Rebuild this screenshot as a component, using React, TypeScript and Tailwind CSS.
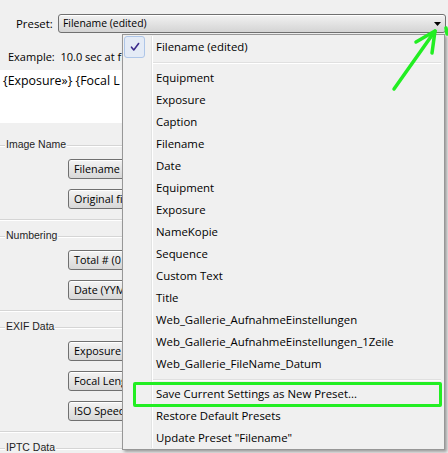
import React from "react";

const presets = [
	"Equipment",
	"Exposure",
	"Caption",
	"Filename",
	"Date",
	"Equipment",
	"Exposure",
	"NameKopie",
	"Sequence",
	"Custom Text",
	"Title",
	"Web_Gallerie_AufnahmeEinstellungen",
	"Web_Gallerie_AufnahmeEinstellungen_1Zeile",
	"Web_Gallerie_FileName_Datum",
];

const actions = [
	"Save Current Settings as New Preset...",
	"Restore Default Presets",
	'Update Preset "Filename"',
];

// only the part left of the open menu is visible
const groups = [
	{ title: "Image Name", top: "mt-[14px]", buttons: ["Filename E", "Original fil"] },
	{ title: "Numbering", top: "mt-[8px]", buttons: ["Total # (0", "Date (YYM"] },
	{ title: "EXIF Data", top: "mt-[8px]", buttons: ["Exposure", "Focal Leng", "ISO Speed"] },
];

function Rule() {
	return <div className="h-px bg-[#d5d5d5] shadow-[0_1px_0_#ffffff]" />;
}

function GroupHeader({ title }: { title: string }) {
	return (
		<div className="flex h-[16px] items-center">
			<div className="w-[5px]">
				<Rule />
			</div>
			<span className="px-[1px] font-['Liberation_Sans',sans-serif] text-[10.5px] text-[#1e1e1e]">
				{title}
			</span>
			<div className="flex-1">
				<Rule />
			</div>
		</div>
	);
}

function Group({ title, top, buttons }: { title: string; top: string; buttons: string[] }) {
	return (
		<div className={top}>
			<GroupHeader title={title} />
			<div className="mt-[6px] flex flex-col gap-[10px] pl-[68px]">
				{buttons.map((b) => (
					<button
						key={b}
						type="button"
						className="h-[20px] w-[140px] shrink-0 whitespace-nowrap rounded-[3px] border border-[#707070] bg-linear-to-b from-[#f4f4f4] to-[#d8d8d8] pl-[5px] text-left text-[10.8px] leading-none text-black shadow-[inset_0_1px_0_#ffffff]"
					>
						{b}
					</button>
				))}
			</div>
			<div className="mt-[10px]">
				<Rule />
			</div>
		</div>
	);
}

function PresetMenu() {
	return (
		<div className="absolute left-[122px] top-[34px] h-[416px] w-[323px] border border-[#979797] bg-[#f0f0f0] pt-px text-[11.4px] text-black shadow-[2px_2px_3px_rgba(0,0,0,0.35)]">
			<div className="absolute bottom-px left-[28px] top-px w-px bg-[#e2e3e3] shadow-[1px_0_0_#ffffff]" />
			<div className="relative flex h-[22px] items-center pl-[1px]">
				<div className="flex h-[22px] w-[21px] items-center justify-center rounded-[3px] border border-[#aec6e8] bg-[#e4ebf6]">
					<svg width="10" height="10" viewBox="0 0 10 10">
						<path d="M1.5 5.2 L3.8 8 L8.6 1.5" fill="none" stroke="#3b2a8c" strokeWidth="1.6" strokeLinecap="round" strokeLinejoin="round" />
					</svg>
				</div>
				<span className="ml-[11px]">Filename (edited)</span>
			</div>
			<div className="relative flex h-[9px] items-center pl-[30px] pr-[3px]">
				<div className="h-px w-full bg-[#e0e0e0] shadow-[0_1px_0_#ffffff]" />
			</div>
			{presets.map((p, i) => (
				<div key={i} className="relative flex h-[22px] items-center pl-[33px]">
					{p}
				</div>
			))}
			<div className="relative flex h-[8px] items-center pl-[30px] pr-[3px]">
				<div className="h-px w-full bg-[#e0e0e0] shadow-[0_1px_0_#ffffff]" />
			</div>
			{actions.map((a) => (
				<div key={a} className="relative flex h-[22px] items-center pl-[33px]">
					{a}
				</div>
			))}
		</div>
	);
}

export default function App() {
	return (
		<div className="relative h-[453px] w-[448px] overflow-hidden bg-[#f0f0f0] font-['Open_Sans',sans-serif] text-[11.4px] text-black">
			<div className="flex items-center gap-[6px] pl-[16px] pr-[2px] pt-[14px]">
				<span className="w-[36px]">Preset:</span>
				<div className="relative flex h-[19px] flex-1 items-center rounded-[3px] border border-[#707070] bg-linear-to-b from-[#f2f2f2] to-[#d4d4d4] pl-[4px] shadow-[inset_0_1px_0_#ffffff]">
					<span className="text-[10.4px]">Filename (edited)</span>
					<svg className="absolute right-[4px] top-[7px]" width="7" height="4" viewBox="0 0 7 4">
						<path d="M0 0 H7 L3.5 4 Z" fill="#000000" />
					</svg>
				</div>
			</div>
			{/* everything right of x=122 is covered by the open menu */}
			<div className="w-[122px] overflow-hidden">
				<div className="w-[446px]">
					<div className="mt-[16px] flex h-[16px] items-center pl-[8px]">
						<span className="whitespace-nowrap text-[11px]">Example:&nbsp; 10.0 sec at f</span>
					</div>
					<div className="mt-[5px] h-[53px] bg-white pl-[3px] pt-[2px]">
						<span className="whitespace-nowrap text-[12.4px]">{"{Exposure»} {Focal L"}</span>
					</div>
					{groups.map((g) => (
						<Group key={g.title} {...g} />
					))}
					<div className="mt-[8px]">
						<GroupHeader title="IPTC Data" />
					</div>
				</div>
			</div>

			<PresetMenu />

			<div className="pointer-events-none absolute left-[133px] top-[382px] h-[25px] w-[309px] rounded-[2px] border-[3px] border-[#22ee22]" />

			<svg className="pointer-events-none absolute left-0 top-0" width="448" height="453" viewBox="0 0 448 453">
				<g fill="none" stroke="#22ee22" strokeWidth="3.5" strokeLinecap="round" strokeLinejoin="round">
					<path d="M394 89 L435 31" />
					<path d="M416 42 L435 31 L432 53" />
					<path d="M446 28 L447 34" />
				</g>
			</svg>
		</div>
	);
}
